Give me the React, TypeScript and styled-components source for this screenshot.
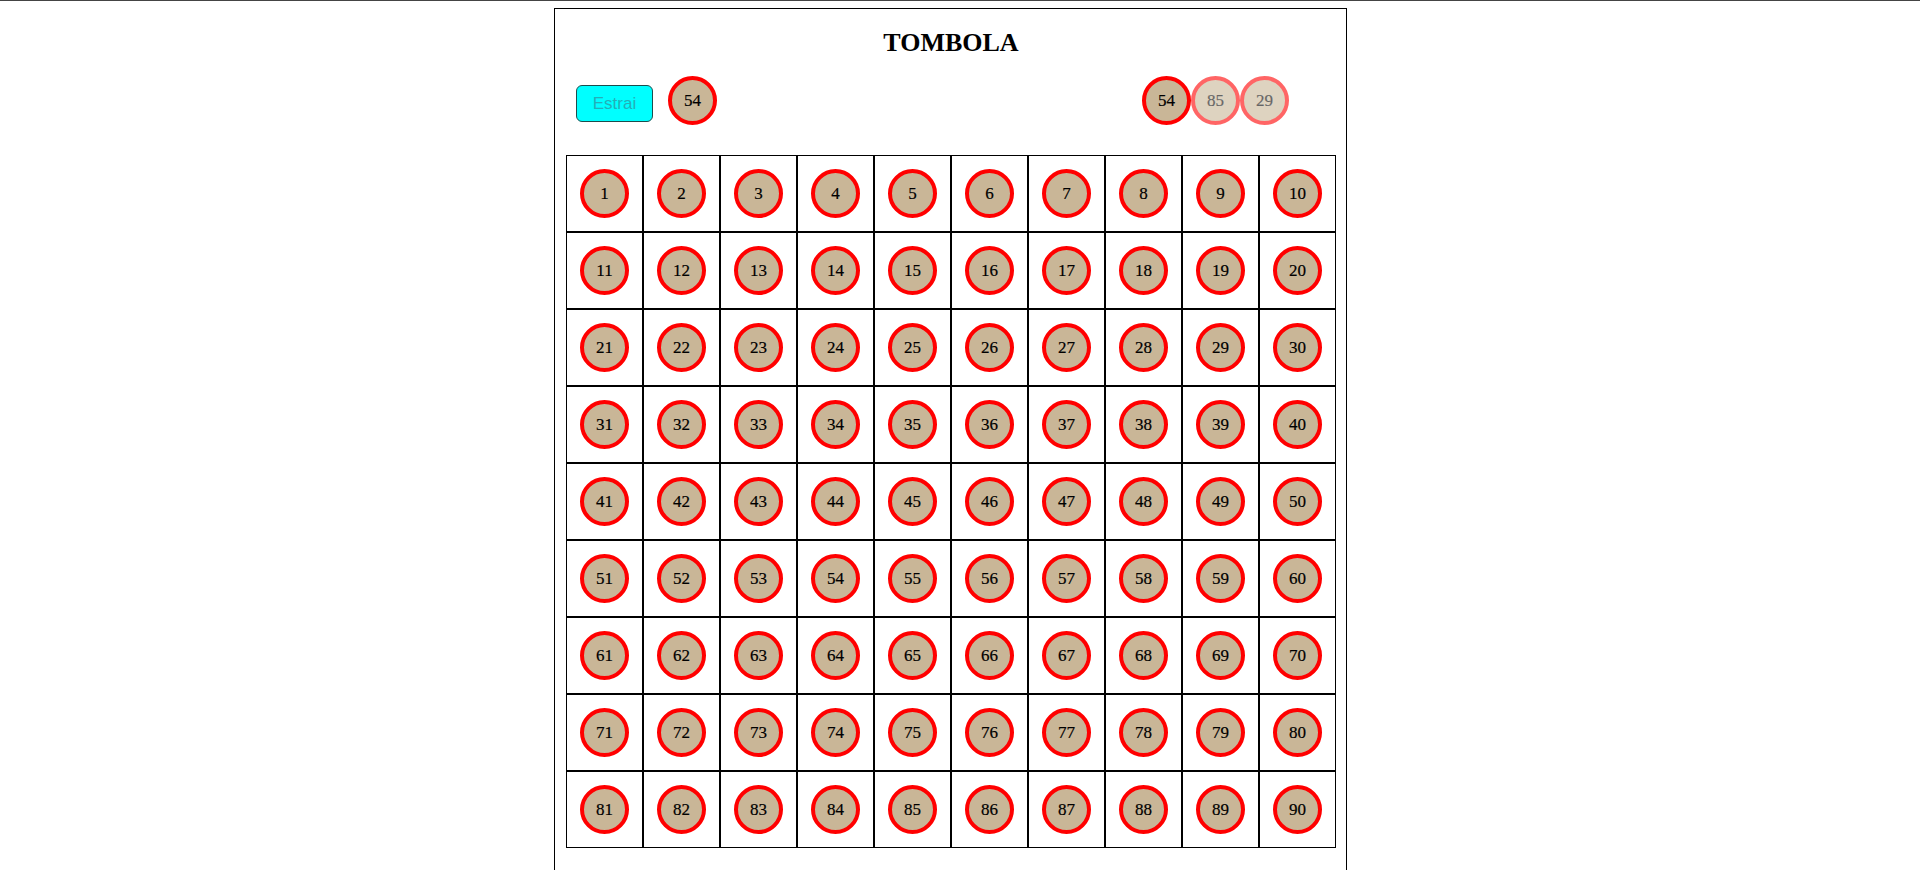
import React from 'react';
import styled, { createGlobalStyle } from 'styled-components';

const GlobalStyle = createGlobalStyle`
	html {
		border-top: 1px solid #444;
	}
	body {
		margin: 7px 8px 8px;
		background: white;
		font-family: 'Liberation Serif', 'Times New Roman', serif;
	}
`;

const StyledBoard = styled.div`
	box-sizing: border-box;
	width: 793px;
	margin-left: 546px;
	border: 1px solid black;
	padding: 19px 10px 82px 11px;
`;

const StyledTitle = styled.h1`
	margin: 0;
	height: 30px;
	line-height: 30px;
	font-size: 26px;
	font-weight: bold;
	text-align: center;
`;

const StyledControls = styled.div`
	display: flex;
	justify-content: space-between;
	align-items: flex-start;
	margin-top: 18px;
	height: 50px;
	padding: 0 47px 0 10px;
`;

const StyledGroup = styled.div<{ $gap: number }>`
	display: flex;
	align-items: flex-start;
	gap: ${(p) => p.$gap}px;
`;

const StyledButton = styled.button`
	width: 77px;
	height: 37px;
	margin-top: 9px;
	background: cyan;
	border: 1px solid #1d4d4d;
	border-radius: 6px;
	color: #22b0b8;
	font-family: 'Liberation Sans', Arial, sans-serif;
	font-size: 17px;
	cursor: pointer;
`;

const StyledBall = styled.div<{ $faded?: boolean }>`
	width: 41px;
	height: 41px;
	border: 4px solid red;
	border-radius: 50%;
	background: #c9b697;
	display: flex;
	align-items: center;
	justify-content: center;
	font-size: 17px;
	color: black;
	-webkit-text-stroke: 0.2px black;
	opacity: ${(p) => (p.$faded ? 0.6 : 1)};
`;

const StyledGrid = styled.div`
	display: grid;
	grid-template-columns: repeat(10, 77px);
	grid-auto-rows: 77px;
	margin-top: 29px;
`;

const StyledCell = styled.div`
	box-sizing: border-box;
	border: 1px solid black;
	display: flex;
	align-items: center;
	justify-content: center;
`;

const numbers = Array.from({ length: 90 }, (_, i) => i + 1);
const history = [54, 85, 29];

const App: React.FC = () => {
	return (
		<>
			<GlobalStyle />
			<StyledBoard>
				<StyledTitle>TOMBOLA</StyledTitle>
				<StyledControls>
					<StyledGroup $gap={15}>
						<StyledButton disabled>Estrai</StyledButton>
						<StyledBall>54</StyledBall>
					</StyledGroup>
					<StyledGroup $gap={0}>
						{history.map((n, i) => (
							<StyledBall key={n} $faded={i > 0}>
								{n}
							</StyledBall>
						))}
					</StyledGroup>
				</StyledControls>
				<StyledGrid>
					{numbers.map((n) => (
						<StyledCell key={n}>
							<StyledBall>{n}</StyledBall>
						</StyledCell>
					))}
				</StyledGrid>
			</StyledBoard>
		</>
	);
};

export default App;
